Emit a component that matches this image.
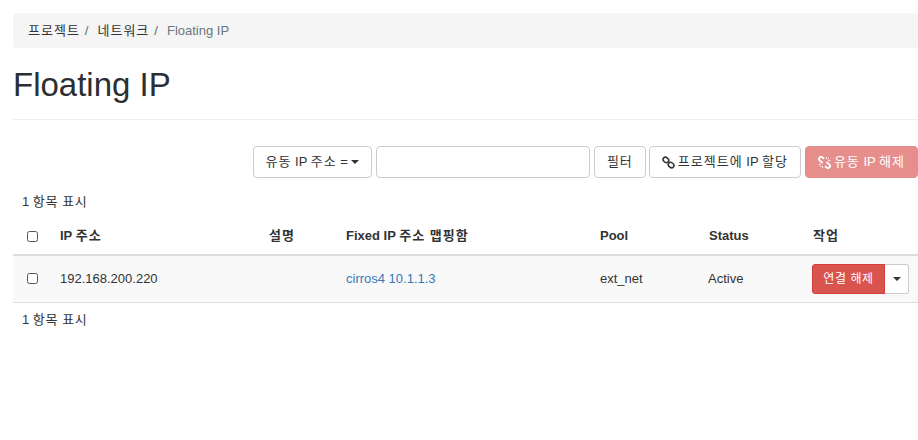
<div class="page">
  <ol class="crumbs">
    <li><span class="ko">프로젝트</span><span class="sep">/</span></li>
    <li><span class="ko">네트워크</span><span class="sep">/</span></li>
    <li class="current">Floating IP</li>
  </ol>
  <h1>Floating IP</h1>
  <div class="toolbar">
    <button class="btn"><span><span class="ko">유동</span> IP <span class="ko">주소</span> =</span> <span class="caret"></span></button>
    <input class="filter" type="text" />
    <button class="btn narrow"><span class="ko">필터</span></button>
    <button class="btn">
      <svg class="ico" viewBox="0 0 13 13" aria-hidden="true"><g fill="none" stroke="#333" stroke-width="1.6"><ellipse cx="3.9" cy="3.9" rx="3" ry="2.4" transform="rotate(40 3.9 3.9)"/><ellipse cx="9.1" cy="9.1" rx="3" ry="2.4" transform="rotate(40 9.1 9.1)"/></g></svg>
      <span><span class="ko">프로젝트에</span> IP <span class="ko">할당</span></span></button>
    <button class="btn danger" disabled>
      <svg class="ico" viewBox="0 0 14 14" aria-hidden="true"><g fill="none" stroke="#fff" stroke-width="2"><path d="M6.4 3 5 1.7a2.2 2.2 0 0 0-3.2 3.2L5 7.6"/><path d="M7.6 11l1.4 1.3a2.2 2.2 0 0 0 3.2-3.2L9 6.4"/></g><g stroke="#fff" stroke-width="1"><path d="M9 .8v2.4M11.9 2.2 10.4 3.7M13.2 5H10.8M5 13.2v-2.4M2.1 11.8l1.5-1.5M.8 9h2.4"/></g></svg>
      <span><span class="ko">유동</span> IP <span class="ko">해제</span></span></button>
  </div>
  <div class="count">1 <span class="ko soft">항목 표시</span></div>
  <table>
    <colgroup>
      <col class="c0" /><col class="c1" /><col class="c2" /><col class="c3" /><col class="c4" /><col class="c5" /><col />
    </colgroup>
    <thead>
      <tr>
        <th class="check"><span class="box"></span></th>
        <th>IP <span class="ko">주소</span></th>
        <th><span class="ko">설명</span></th>
        <th>Fixed IP <span class="ko">주소 맵핑함</span></th>
        <th>Pool</th>
        <th class="status">Status</th>
        <th><span class="ko">작업</span></th>
      </tr>
    </thead>
    <tbody>
      <tr>
        <td class="check"><span class="box"></span></td>
        <td>192.168.200.220</td>
        <td></td>
        <td><a href="#top">cirros4 10.1.1.3</a></td>
        <td>ext_net</td>
        <td>Active</td>
        <td>
          <div class="group">
            <button class="act"><span class="ko soft">연결 해제</span></button>
            <button class="more" aria-label="더 보기"><span class="caret"></span></button>
          </div>
        </td>
      </tr>
    </tbody>
  </table>
  <div class="count after">1 <span class="ko soft">항목 표시</span></div>
</div>

<style>
  :global(body) {
    margin: 0;
    background: #fff;
    overflow: hidden;
  }
  .page {
    width: 905px;
    height: 440px;
    margin-left: 13px;
    padding-top: 13px;
    box-sizing: border-box;
    font-family: "Liberation Sans", "Noto Sans CJK KR", sans-serif;
    font-size: 13px;
    line-height: 18px;
    color: #333;
  }
  .ko {
    letter-spacing: 1px;
  }
  .ko.soft {
    letter-spacing: 0.6px;
  }
  .crumbs {
    list-style: none;
    margin: 0;
    padding: 9px 15px 8px;
    height: 35px;
    box-sizing: border-box;
    display: flex;
    background: #f5f5f5;
    border-radius: 4px;
  }
  .crumbs li {
    white-space: nowrap;
  }
  .sep {
    color: #5a6a76;
    padding: 0 5px;
    margin-right: 4px;
  }
  .current {
    color: #6a7680;
  }
  h1 {
    margin: 0;
    padding: 17px 0 15px;
    height: 72px;
    box-sizing: border-box;
    border-bottom: 1px solid #eee;
    font-size: 33px;
    font-weight: 400;
    line-height: 39px;
    color: #2b2f33;
  }
  .toolbar {
    display: flex;
    justify-content: flex-end;
    gap: 4px;
    margin-top: 26px;
  }
  .btn {
    height: 32px;
    padding: 0 12px;
    box-sizing: border-box;
    border: 1px solid #ccc;
    border-radius: 4px;
    background: #fff;
    color: #333;
    font: inherit;
    white-space: nowrap;
    display: inline-flex;
    align-items: center;
    gap: 3px;
  }
  .narrow {
    width: 52px;
    padding: 0;
    justify-content: center;
    margin-right: -1px;
  }
  .danger {
    background: #e58e8c;
    border-color: #e58e8c;
    color: #fff;
  }
  .filter {
    width: 214px;
    height: 32px;
    box-sizing: border-box;
    border: 1px solid #ccc;
    border-radius: 4px;
    padding: 0 12px;
  }
  .caret {
    display: inline-block;
    width: 0;
    height: 0;
    border-top: 4px solid #333;
    border-left: 4px solid transparent;
    border-right: 4px solid transparent;
  }
  .ico {
    width: 13px;
    height: 13px;
    flex: none;
  }
  .count {
    padding: 15px 9px 0;
    height: 40px;
    box-sizing: border-box;
  }
  .count.after {
    padding-top: 8px;
  }
  table {
    width: 905px;
    table-layout: fixed;
    border-collapse: collapse;
  }
  .c0 { width: 39px; }
  .c1 { width: 209px; }
  .c2 { width: 77px; }
  .c3 { width: 254px; }
  .c4 { width: 108px; }
  .c5 { width: 105px; }
  th {
    height: 37px;
    padding: 0 8px;
    box-sizing: border-box;
    text-align: left;
    font-weight: 700;
    border-bottom: 2px solid #ddd;
    vertical-align: middle;
    white-space: nowrap;
  }
  th.status {
    padding-left: 9px;
  }
  td {
    height: 47px;
    padding: 0 8px;
    box-sizing: border-box;
    background: #f9f9f9;
    border-bottom: 1px solid #ddd;
    vertical-align: middle;
    white-space: nowrap;
  }
  .check {
    padding: 0 0 0 14px;
    line-height: 0;
  }
  .box {
    display: inline-block;
    width: 11px;
    height: 11px;
    box-sizing: border-box;
    border: 1px solid #555;
    border-radius: 2.5px;
    background: #fff;
  }
  a {
    color: #337ab7;
    text-decoration: none;
  }
  .group {
    display: flex;
    margin-left: -1px;
  }
  .act {
    height: 30px;
    width: 73px;
    padding: 0;
    border: 1px solid #d43f3a;
    border-radius: 3px 0 0 3px;
    background: #d9534f;
    color: #fff;
    font: inherit;
    font-size: 12px;
  }
  .more {
    width: 24px;
    height: 30px;
    padding: 0;
    border: 1px solid #ccc;
    border-left: 0;
    border-radius: 0 3px 3px 0;
    background: #fff;
    display: flex;
    align-items: center;
    justify-content: center;
  }
</style>
